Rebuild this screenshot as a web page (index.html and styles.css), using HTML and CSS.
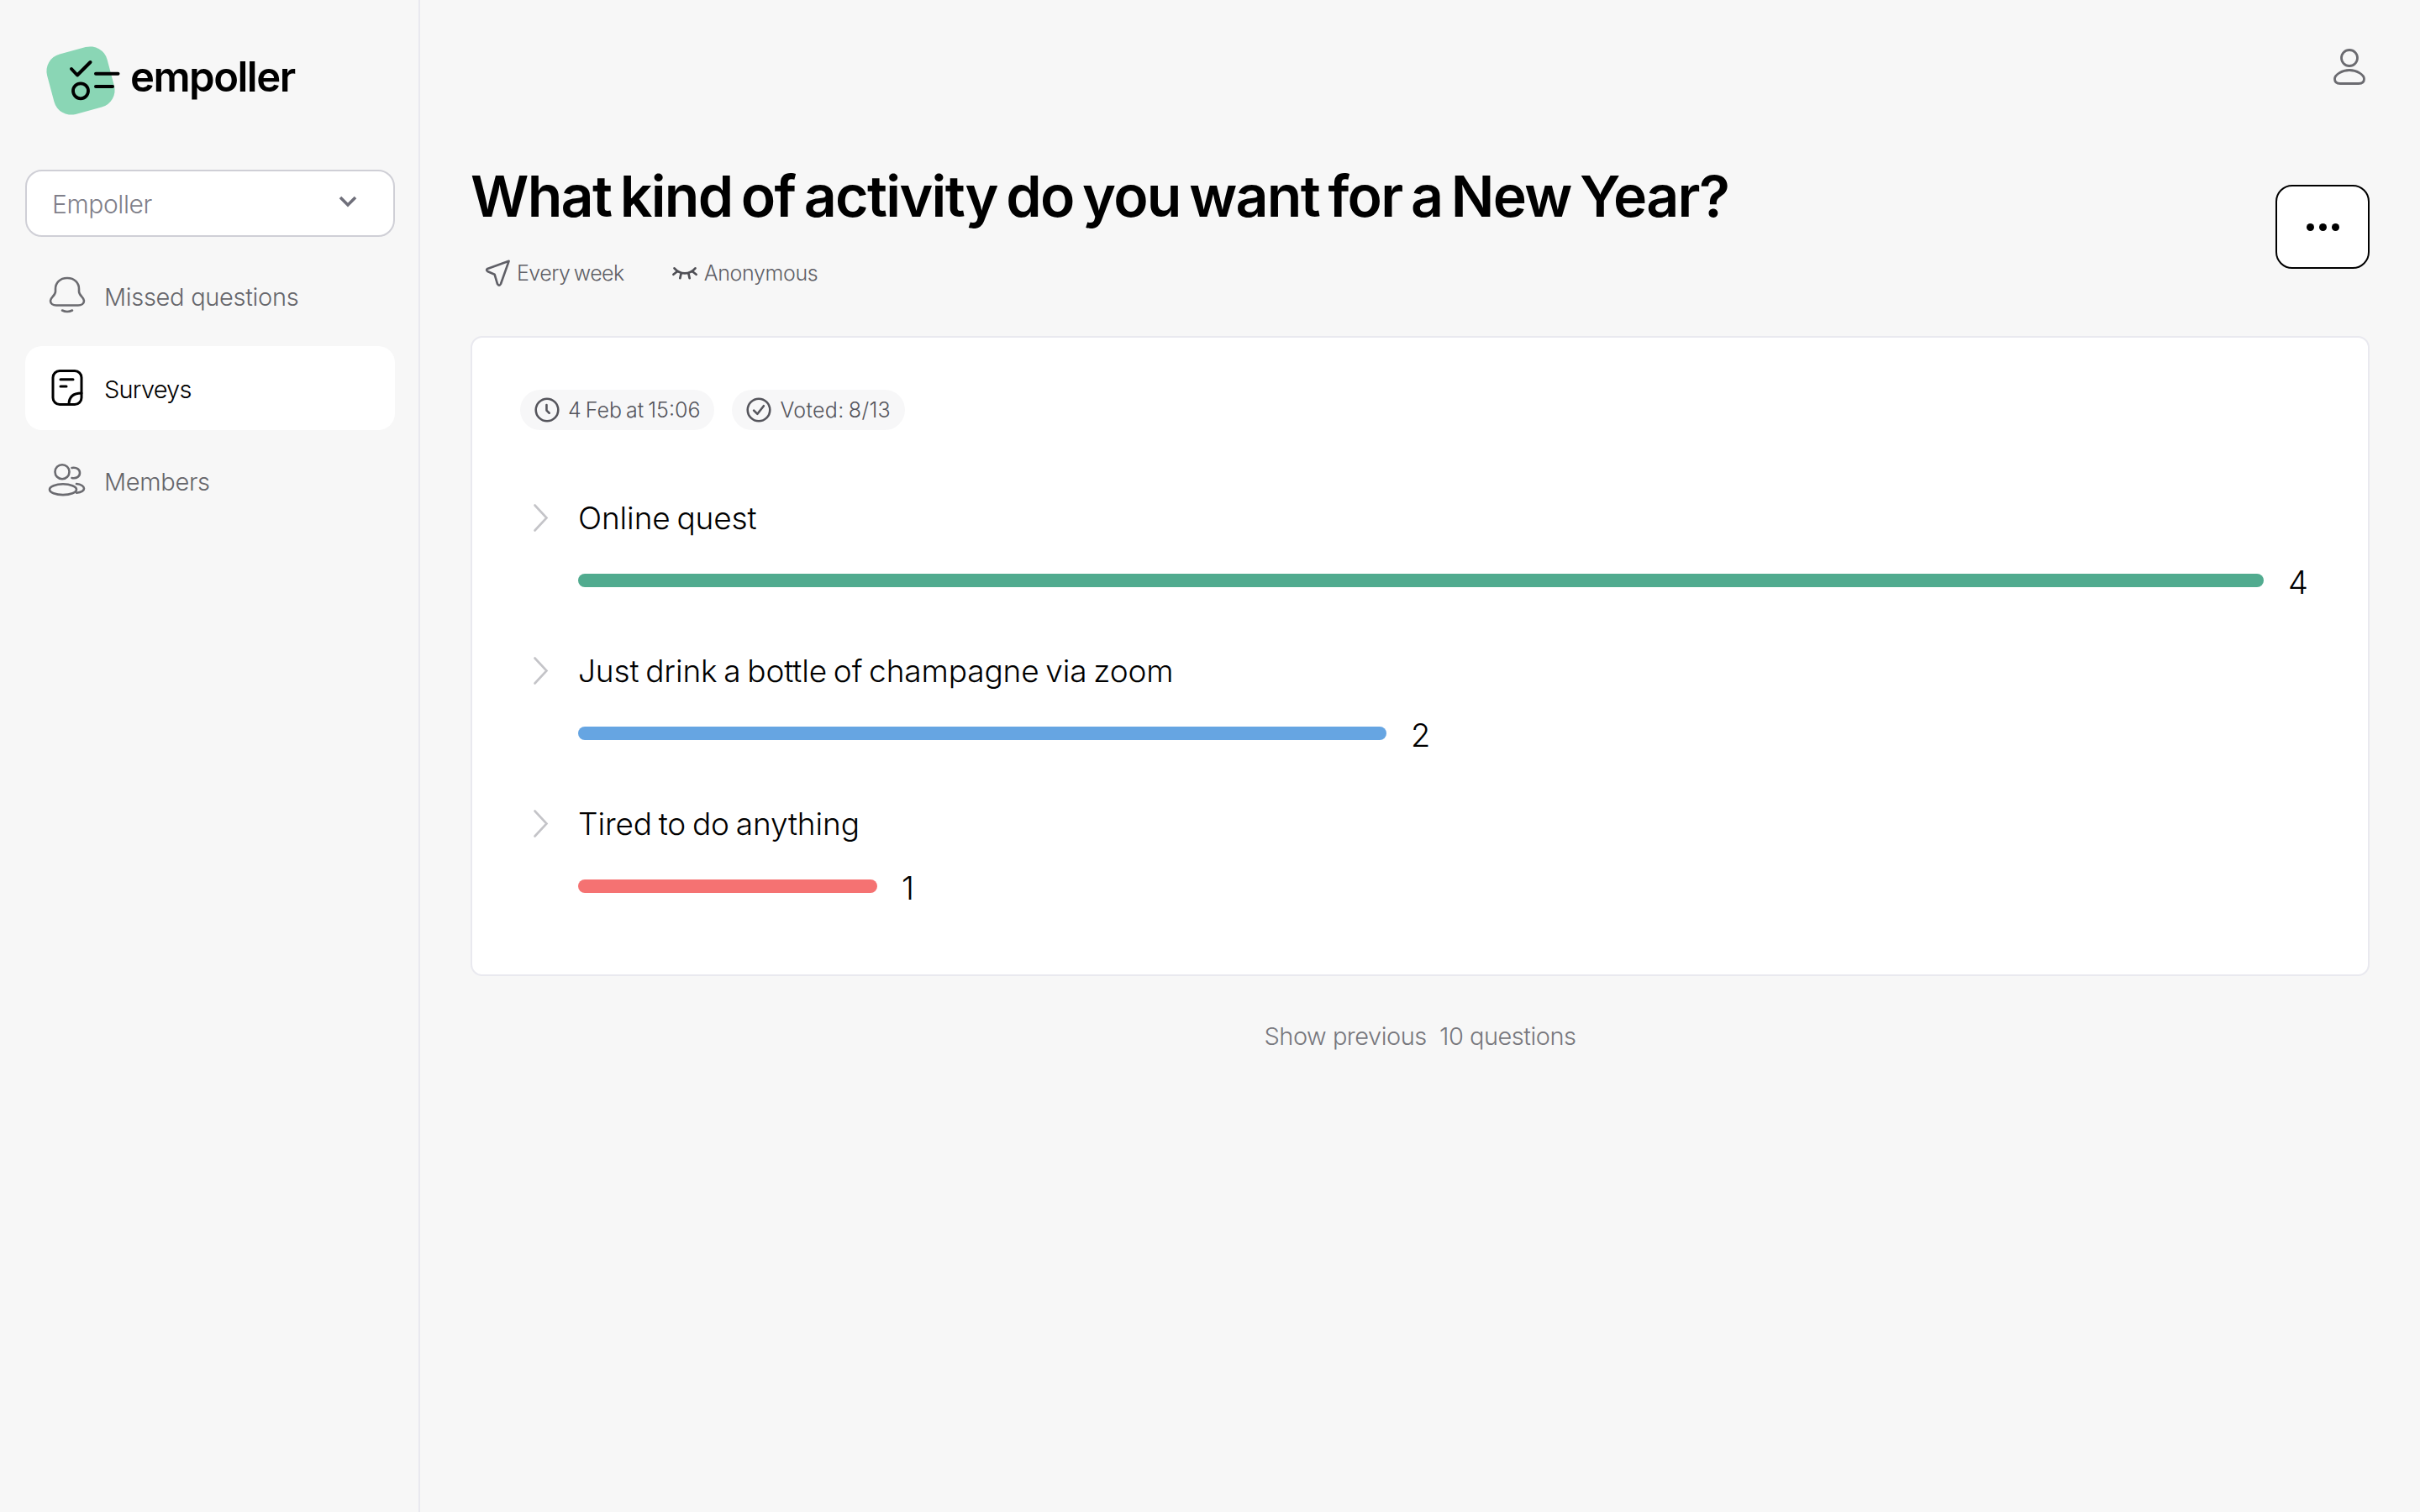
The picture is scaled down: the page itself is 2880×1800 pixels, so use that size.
FILE: index.html
```html
<!DOCTYPE html>
<html lang="en">
<head>
<meta charset="utf-8">
<title>empoller</title>
<link rel="stylesheet" href="styles.css">
</head>
<body>
<div class="app">
  <aside class="sidebar">
    <div class="logo">
      <svg class="logo-mark" viewBox="50 50 95 95" fill="none">
        <rect x="59" y="59" width="74" height="74" rx="21" fill="#8ad6b5" transform="rotate(-15 96 96)"/>
        <path d="M85 82l7 7.500 15.500-15.500M114 87.700h26.500M114 103h20" stroke="#000" stroke-width="4" stroke-linecap="round" stroke-linejoin="round"/>
        <circle cx="96" cy="108.300" r="9" stroke="#000" stroke-width="3.800"/>
      </svg>
      <span class="logo-text">empoller</span>
    </div>
    <div class="select">
      <span>Empoller</span>
      <svg class="select-arrow" viewBox="0 0 24 16" fill="none"><path d="M3 3l9 9 9-9" stroke="#6f6f7a" stroke-width="3.600"/></svg>
    </div>
    <nav class="nav">
      <a class="nav-item">
        <svg class="nav-icon" viewBox="0 0 48 48" fill="none" stroke="#6b6b70" stroke-width="2.600" stroke-linecap="round" stroke-linejoin="round"><path d="M24 3C15 3 10 9 10 16v3c0 5-6 7-6 11 0 3.500 3 5.500 7 5.500h26c4 0 7-2 7-5.500 0-4-6-6-6-11v-3c0-7-5-13-14-13z"/><path d="M18 41.500q6 3 12 0"/></svg>
        <span>Missed questions</span>
      </a>
      <a class="nav-item nav-item-active">
        <svg class="nav-icon" viewBox="0 0 48 48" fill="none" stroke="#000" stroke-width="3" stroke-linecap="round" stroke-linejoin="round"><rect x="7" y="3.500" width="34" height="40" rx="8"/><path d="M16 13.700h15M16 22h7M41 30c-8 0-15 3-15 13.500"/></svg>
        <span>Surveys</span>
      </a>
      <a class="nav-item">
        <svg class="nav-icon" viewBox="0 0 48 48" fill="none" stroke="#6b6b70" stroke-width="2.600" stroke-linecap="round" stroke-linejoin="round"><circle cx="18" cy="13.700" r="8.500"/><path d="M29.500 9c6-1 9.500 2 9.500 6s-3.500 7-9.500 6"/><ellipse cx="19" cy="34.700" rx="16" ry="6.400"/><path d="M35 28c5.500.5 9 3 9 5.500s-3 4.500-9 5.200"/></svg>
        <span>Members</span>
      </a>
    </nav>
  </aside>
  <main class="main">
    <header class="topbar">
      <svg class="user-icon" viewBox="0 0 48 48" fill="none" stroke="#6b6b70" stroke-width="2.800" stroke-linejoin="round"><circle cx="24" cy="13" r="9.500"/><path d="M24 27.500c-9 0-17.500 5.500-17.500 10.500 0 3.500 2.500 5.500 6.500 5.500h22c4 0 6.500-2 6.500-5.500 0-5-8.500-10.500-17.500-10.500z"/></svg>
    </header>
    <section class="head">
      <div class="head-text">
        <h1 class="title">What kind of activity do you want for a New Year?</h1>
        <div class="meta">
          <span class="meta-item">
            <svg class="meta-icon" viewBox="0 0 30 30" fill="none" stroke="#5f5f66" stroke-width="2.300" stroke-linecap="round" stroke-linejoin="round"><path d="M27 2.500L4.500 10.500Q2.500 12 5 13.500L12 16.500 15 26.500Q17 29.500 18.500 26.500z"/></svg>
            Every week
          </span>
          <span class="meta-item meta-anon">
            <svg class="meta-icon" viewBox="0 0 30 30" fill="none" stroke="#4f4f55" stroke-width="2.400" stroke-linecap="round"><path d="M4 10c6 7 16 7 22 0M3 16.500l4.500-3.500M27 16.500L22.500 13M11 16l-1 4.500M19 16l1 4.500"/></svg>
            Anonymous
          </span>
        </div>
      </div>
      <button class="more" type="button" aria-label="More"><i class="dot"></i><i class="dot"></i><i class="dot"></i></button>
    </section>
    <section class="card">
      <div class="chips">
        <span class="chip">
          <svg class="chip-icon" viewBox="0 0 28 28" fill="none" stroke="#55555c" stroke-width="2.400" stroke-linecap="round" stroke-linejoin="round"><circle cx="14" cy="14" r="12.400"/><path d="M13.500 8.500v6l3 3"/></svg>
          4 Feb at 15:06
        </span>
        <span class="chip chip-voted">
          <svg class="chip-icon" viewBox="0 0 28 28" fill="none" stroke="#55555c" stroke-width="2.400" stroke-linecap="round" stroke-linejoin="round"><circle cx="14" cy="14" r="12.400"/><path d="M8.500 14.500l4 4 7-9"/></svg>
          Voted: 8/13
        </span>
      </div>
      <div class="rows">
        <div class="row">
          <svg class="chevron" viewBox="0 0 79 50" fill="none"><path d="M27.500 9.500l14 15-14 15" stroke="#c4c4c8" stroke-width="2.600" stroke-linecap="round"/></svg>
          <div class="row-label">Online quest</div>
          <div class="row-bar"><span class="bar bar-green" style="width:2006px"></span><span class="count">4</span></div>
        </div>
        <div class="row">
          <svg class="chevron" viewBox="0 0 79 50" fill="none"><path d="M27.500 9.500l14 15-14 15" stroke="#c4c4c8" stroke-width="2.600" stroke-linecap="round"/></svg>
          <div class="row-label">Just drink a bottle of champagne via zoom</div>
          <div class="row-bar"><span class="bar bar-blue" style="width:962px"></span><span class="count">2</span></div>
        </div>
        <div class="row">
          <svg class="chevron" viewBox="0 0 79 50" fill="none"><path d="M27.500 9.500l14 15-14 15" stroke="#c4c4c8" stroke-width="2.600" stroke-linecap="round"/></svg>
          <div class="row-label">Tired to do anything</div>
          <div class="row-bar"><span class="bar bar-red" style="width:356px"></span><span class="count">1</span></div>
        </div>
      </div>
    </section>
    <div class="previous">Show previous&nbsp; 10 questions</div>
  </main>
</div>
</body>
</html>
```
FILE: styles.css
```css
* { box-sizing: border-box; }
html, body { margin: 0; height: 100%; }
body {
  background: #f7f7f7;
  color: #000;
  font-family: "Inter", "Liberation Sans", sans-serif;
}
.app { display: flex; min-height: 1800px; }

.sidebar {
  width: 500px;
  flex: none;
  padding: 50px 30px 0;
  border-right: 2px solid #e9e9ef;
}
.logo { display: flex; align-items: center; gap: 10px; margin-left: 20px; height: 95px; }
.logo-mark { width: 95px; height: 95px; flex: none; }
.logo-text { font-size: 49px; font-weight: 600; letter-spacing: -1.5px; margin-top: -12px; }

.select {
  margin-top: 57px;
  width: 440px;
  height: 80px;
  display: flex;
  align-items: center;
  justify-content: space-between;
  padding: 2px 42px 0 30px;
  background: #fff;
  border: 2px solid #cfcfd6;
  border-radius: 20px;
  color: #7f7f8a;
  font-size: 30px;
  font-weight: 300;
  letter-spacing: -.4px;
}
.select-arrow { width: 24px; height: 16px; margin-top: -6px; }

.nav { display: flex; flex-direction: column; gap: 10px; margin-top: 20px; width: 440px; }
.nav-item {
  height: 100px;
  display: flex;
  align-items: center;
  gap: 20px;
  padding-left: 26px;
  border-radius: 20px;
  color: #66666b;
  font-size: 29px;
  font-weight: 300;
  letter-spacing: -.3px;
}
.nav-item span { margin-top: 2px; }
.nav-item-active { background: #fff; color: #000; letter-spacing: -.8px; }
.nav-icon { width: 48px; height: 48px; flex: none; }

.main { flex: 1; padding: 56px 60px 0; min-width: 0; }
.topbar { display: flex; justify-content: flex-end; height: 48px; }
.user-icon { width: 48px; height: 48px; }

.head { display: flex; justify-content: space-between; align-items: flex-start; margin-top: 87px; height: 209px; }
.title { margin: 0; font-size: 68px; line-height: 84px; font-weight: 600; letter-spacing: -1.7px; word-spacing: -5px; }
.meta { display: flex; gap: 55px; margin-top: 32px; padding-left: 15px; height: 36px; }
.meta-item { display: flex; align-items: center; gap: 6px; color: #5f5f66; font-size: 25px; font-weight: 300; letter-spacing: -.55px; word-spacing: -2px; }
.meta-anon { letter-spacing: -.35px; }
.meta-icon { width: 34px; height: 34px; flex: none; }
.more {
  margin-top: 29px;
  width: 112px;
  height: 100px;
  display: flex;
  align-items: center;
  justify-content: center;
  gap: 6px;
  padding: 0;
  background: #fff;
  border: 2px solid #000;
  border-radius: 20px;
}
.dot { width: 9px; height: 9px; border-radius: 50%; background: #000; }

.card {
  height: 762px;
  padding: 62px 47px 0;
  background: #fff;
  border: 2px solid #e9e9ef;
  border-radius: 14px;
}
.chips { display: flex; gap: 21px; margin-left: 10px; }
.chip {
  height: 48px;
  display: flex;
  align-items: center;
  gap: 10px;
  padding: 0 17px 0 17px;
  border-radius: 24px;
  background: #f7f7f8;
  color: #55555c;
  font-size: 25px;
  font-weight: 300;
  letter-spacing: 0;
  word-spacing: -2px;
}
.chip-voted { letter-spacing: .3px; }
.chip-icon { width: 30px; height: 30px; flex: none; }

.rows { display: flex; flex-direction: column; gap: 63px; margin-top: 80px; }
.row { display: grid; grid-template-columns: 79px 1fr; grid-template-rows: 50px 40px; row-gap: 29px; }
.chevron { width: 79px; height: 50px; }
.row-label { font-size: 37px; line-height: 50px; font-weight: 300; letter-spacing: -.12px; word-spacing: -2.5px; }
.row-bar { grid-column: 2; display: flex; align-items: center; gap: 29px; }
.bar { height: 16px; border-radius: 8px; flex: none; }
.bar-green { background: #51ab8f; }
.bar-blue { background: #66a5e2; }
.bar-red { background: #f57272; }
.count { font-size: 38px; line-height: 40px; font-weight: 300; margin-top: 3px; }

.previous { margin-top: 52px; text-align: center; color: #77777d; font-size: 29px; line-height: 40px; font-weight: 300; letter-spacing: -.5px; }
```
